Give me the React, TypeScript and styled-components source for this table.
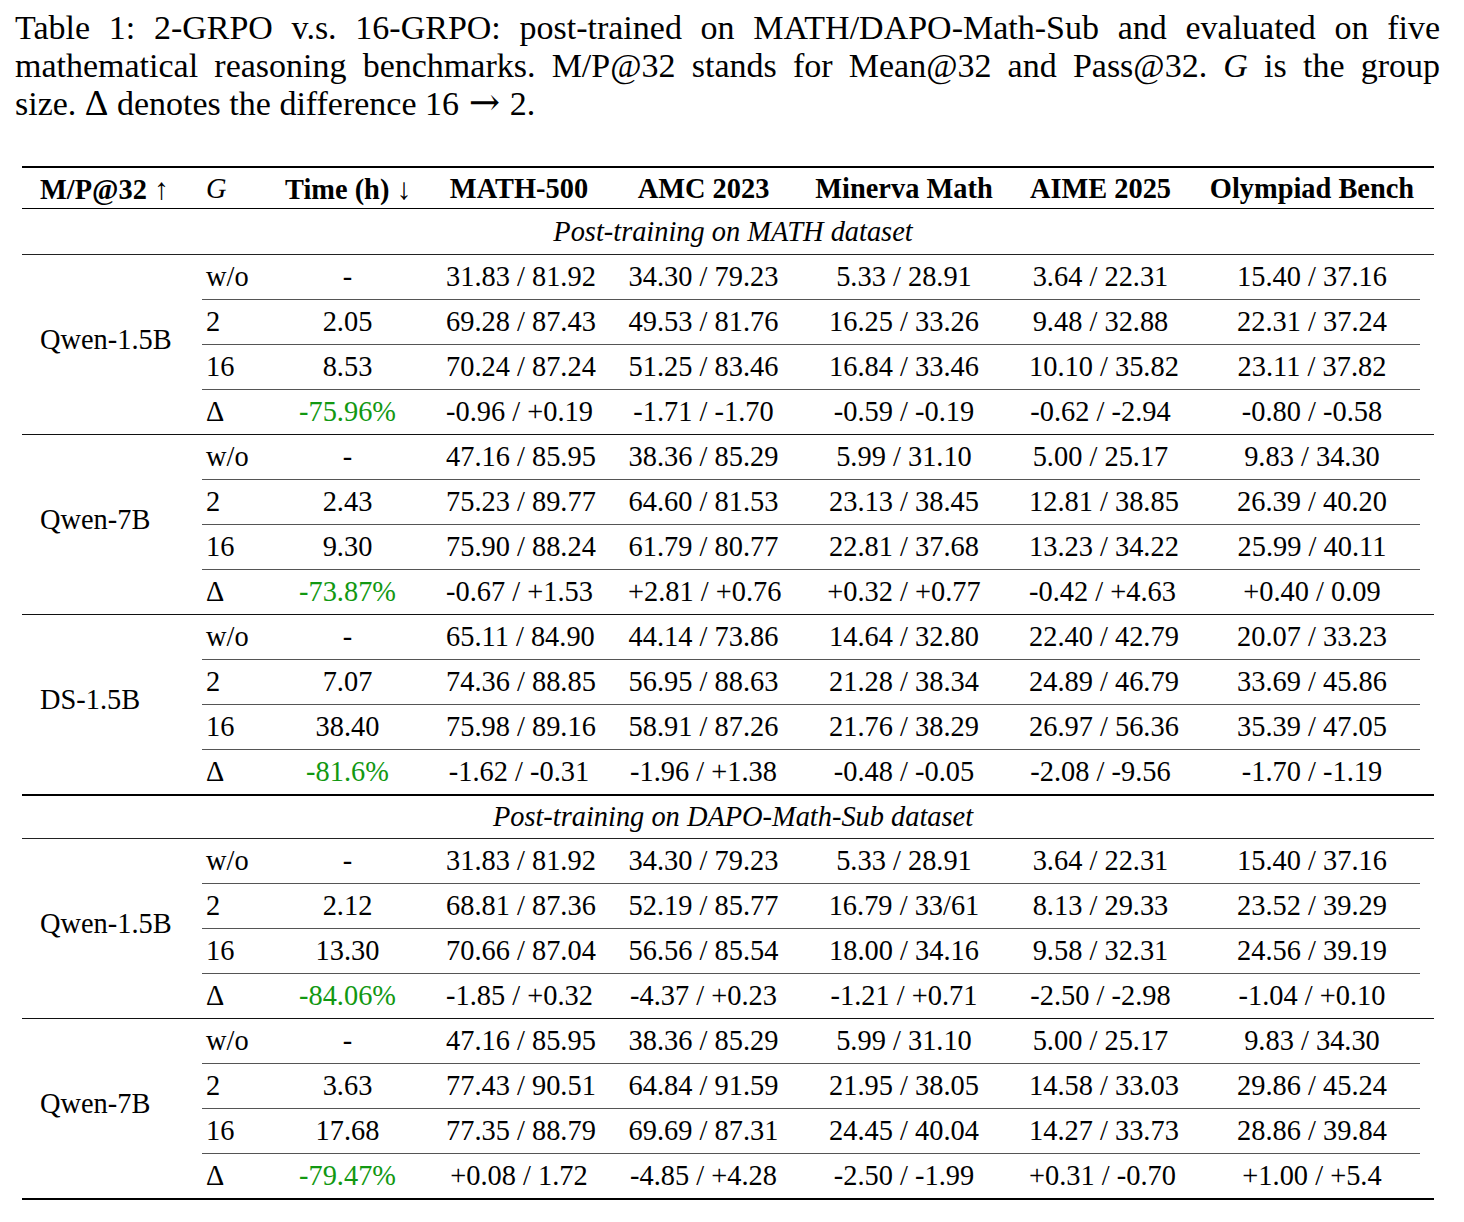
import React from "react";
import styled, { createGlobalStyle } from "styled-components";

const SERIF = `"Liberation Serif", Tinos, "Times New Roman", Times, serif`;

const Global = createGlobalStyle`
  html, body { margin: 0; padding: 0; background: #fff; }
  body { font-family: ${SERIF}; color: #000; }
`;

const Page = styled.div`
  padding: 9px 0 20px 0;
  width: 1464px;
  font-family: ${SERIF};
`;

const Caption = styled.div`
  margin-left: 15px;
  width: 1425px;
  font-size: 34px;
  line-height: 38px;
`;

const CapLine = styled.div<{ $justify?: boolean }>`
  text-align: ${(p) => (p.$justify ? "justify" : "left")};
  text-align-last: ${(p) => (p.$justify ? "justify" : "left")};
  white-space: nowrap;
`;

const MathArrow = styled.span`
  font-family: "DejaVu Serif", "DejaVu Sans", serif;
  font-size: 1.1em;
  line-height: 0;
  margin: 0 0.26em;
`;

const MathDelta = styled.span`
  font-size: 1.08em;
  line-height: 0;
`;

const Table = styled.div`
  margin: 43px 0 0 22px;
  width: 1412px;
  font-size: 28.4px;
`;

const Rule = styled.div<{ $w: number; $c?: string }>`
  height: ${(p) => p.$w}px;
  background: ${(p) => p.$c ?? "#000"};
`;

const COLS = "166px 79px 161px 182px 187px 214px 179px 244px";
const RIGHT_COLS = "79px 161px 182px 187px 214px 179px 244px";

const HeaderRow = styled.div`
  display: grid;
  grid-template-columns: ${COLS};
  height: 40px;
  align-items: center;
  font-weight: bold;
  padding-top: 1px;
  box-sizing: border-box;
`;

const HCell = styled.div<{ $left?: boolean }>`
  text-align: ${(p) => (p.$left ? "left" : "center")};
  padding: 0 18px;
  white-space: nowrap;
`;

const Arrow = styled.span`
  font-weight: normal;
  font-size: 30px;
`;

const Ital = styled.i`
  font-weight: normal;
  font-style: italic;
`;

const SectionRow = styled.div<{ $h: number }>`
  height: ${(p) => p.$h}px;
  display: flex;
  align-items: center;
  justify-content: center;
  font-style: italic;
  padding-left: 10px;
`;

const Group = styled.div`
  display: grid;
  grid-template-columns: 166px 1fr;
`;

const ModelCell = styled.div`
  display: flex;
  align-items: center;
  padding: 0 0 10px 18px;
  white-space: nowrap;
`;

const Rows = styled.div`
  display: flex;
  flex-direction: column;
`;

const DataRow = styled.div`
  display: grid;
  grid-template-columns: ${RIGHT_COLS};
  height: 44px;
  align-items: center;
`;

const Cell = styled.div<{ $left?: boolean; $green?: boolean }>`
  text-align: ${(p) => (p.$left ? "left" : "center")};
  padding: 0 18px;
  white-space: nowrap;
  color: ${(p) => (p.$green ? "#129812" : "#000")};
`;

const CmidRule = styled.div`
  height: 1px;
  margin: 0 14px;
  background: #555;
`;

type RowData = [string, string, string, string, string, string, string];
type GroupData = { model: string; rows: RowData[] };

const section1: GroupData[] = [
  {
    model: "Qwen-1.5B",
    rows: [
      ["w/o", "-", "31.83 / 81.92", "34.30 / 79.23", "5.33 / 28.91", "3.64 / 22.31", "15.40 / 37.16"],
      ["2", "2.05", "69.28 / 87.43", "49.53 / 81.76", "16.25 / 33.26", "9.48 / 32.88", "22.31 / 37.24"],
      ["16", "8.53", "70.24 / 87.24", "51.25 / 83.46", "16.84 / 33.46", "10.10 / 35.82", "23.11 / 37.82"],
      ["Δ", "-75.96%", "-0.96 / +0.19", "-1.71 / -1.70", "-0.59 / -0.19", "-0.62 / -2.94", "-0.80 / -0.58"],
    ],
  },
  {
    model: "Qwen-7B",
    rows: [
      ["w/o", "-", "47.16 / 85.95", "38.36 / 85.29", "5.99 / 31.10", "5.00 / 25.17", "9.83 / 34.30"],
      ["2", "2.43", "75.23 / 89.77", "64.60 / 81.53", "23.13 / 38.45", "12.81 / 38.85", "26.39 / 40.20"],
      ["16", "9.30", "75.90 / 88.24", "61.79 / 80.77", "22.81 / 37.68", "13.23 / 34.22", "25.99 / 40.11"],
      ["Δ", "-73.87%", "-0.67 / +1.53", "+2.81 / +0.76", "+0.32 / +0.77", "-0.42 / +4.63", "+0.40 / 0.09"],
    ],
  },
  {
    model: "DS-1.5B",
    rows: [
      ["w/o", "-", "65.11 / 84.90", "44.14 / 73.86", "14.64 / 32.80", "22.40 / 42.79", "20.07 / 33.23"],
      ["2", "7.07", "74.36 / 88.85", "56.95 / 88.63", "21.28 / 38.34", "24.89 / 46.79", "33.69 / 45.86"],
      ["16", "38.40", "75.98 / 89.16", "58.91 / 87.26", "21.76 / 38.29", "26.97 / 56.36", "35.39 / 47.05"],
      ["Δ", "-81.6%", "-1.62 / -0.31", "-1.96 / +1.38", "-0.48 / -0.05", "-2.08 / -9.56", "-1.70 / -1.19"],
    ],
  },
];

const section2: GroupData[] = [
  {
    model: "Qwen-1.5B",
    rows: [
      ["w/o", "-", "31.83 / 81.92", "34.30 / 79.23", "5.33 / 28.91", "3.64 / 22.31", "15.40 / 37.16"],
      ["2", "2.12", "68.81 / 87.36", "52.19 / 85.77", "16.79 / 33/61", "8.13 / 29.33", "23.52 / 39.29"],
      ["16", "13.30", "70.66 / 87.04", "56.56 / 85.54", "18.00 / 34.16", "9.58 / 32.31", "24.56 / 39.19"],
      ["Δ", "-84.06%", "-1.85 / +0.32", "-4.37 / +0.23", "-1.21 / +0.71", "-2.50 / -2.98", "-1.04 / +0.10"],
    ],
  },
  {
    model: "Qwen-7B",
    rows: [
      ["w/o", "-", "47.16 / 85.95", "38.36 / 85.29", "5.99 / 31.10", "5.00 / 25.17", "9.83 / 34.30"],
      ["2", "3.63", "77.43 / 90.51", "64.84 / 91.59", "21.95 / 38.05", "14.58 / 33.03", "29.86 / 45.24"],
      ["16", "17.68", "77.35 / 88.79", "69.69 / 87.31", "24.45 / 40.04", "14.27 / 33.73", "28.86 / 39.84"],
      ["Δ", "-79.47%", "+0.08 / 1.72", "-4.85 / +4.28", "-2.50 / -1.99", "+0.31 / -0.70", "+1.00 / +5.4"],
    ],
  },
];

const GroupBlock: React.FC<{ g: GroupData }> = ({ g }) => (
  <Group>
    <ModelCell>{g.model}</ModelCell>
    <Rows>
      {g.rows.map((r, i) => (
        <React.Fragment key={i}>
          {i > 0 && <CmidRule />}
          <DataRow>
            {r.map((c, j) => (
              <Cell key={j} $left={j === 0} $green={j === 1 && r[0] === "Δ"}>
                {c}
              </Cell>
            ))}
          </DataRow>
        </React.Fragment>
      ))}
    </Rows>
  </Group>
);

const Section: React.FC<{ groups: GroupData[] }> = ({ groups }) => (
  <>
    {groups.map((g, i) => (
      <React.Fragment key={i}>
        {i > 0 && <Rule $w={1} $c="#111" />}
        <GroupBlock g={g} />
      </React.Fragment>
    ))}
  </>
);

export default function App() {
  return (
    <Page>
      <Global />
      <Caption>
        <CapLine $justify>
          Table 1: 2-GRPO v.s. 16-GRPO: post-trained on MATH/DAPO-Math-Sub and evaluated on five
        </CapLine>
        <CapLine $justify>
          mathematical reasoning benchmarks. M/P@32 stands for Mean@32 and Pass@32. <i>G</i> is the group
        </CapLine>
        <CapLine>
          size. <MathDelta>Δ</MathDelta> denotes the difference 16<MathArrow>→</MathArrow>2.
        </CapLine>
      </Caption>
      <Table>
        <Rule $w={2} />
        <HeaderRow>
          <HCell $left>
            M/P@32 <Arrow>↑</Arrow>
          </HCell>
          <HCell $left>
            <Ital>G</Ital>
          </HCell>
          <HCell>
            Time (h) <Arrow>↓</Arrow>
          </HCell>
          <HCell>MATH-500</HCell>
          <HCell>AMC 2023</HCell>
          <HCell>Minerva Math</HCell>
          <HCell>AIME 2025</HCell>
          <HCell>Olympiad Bench</HCell>
        </HeaderRow>
        <Rule $w={1} />
        <SectionRow $h={45}>Post-training on MATH dataset</SectionRow>
        <Rule $w={1} $c="#222" />
        <Section groups={section1} />
        <Rule $w={2} />
        <SectionRow $h={42}>Post-training on DAPO-Math-Sub dataset</SectionRow>
        <Rule $w={1} $c="#222" />
        <Section groups={section2} />
        <Rule $w={2} />
      </Table>
    </Page>
  );
}
